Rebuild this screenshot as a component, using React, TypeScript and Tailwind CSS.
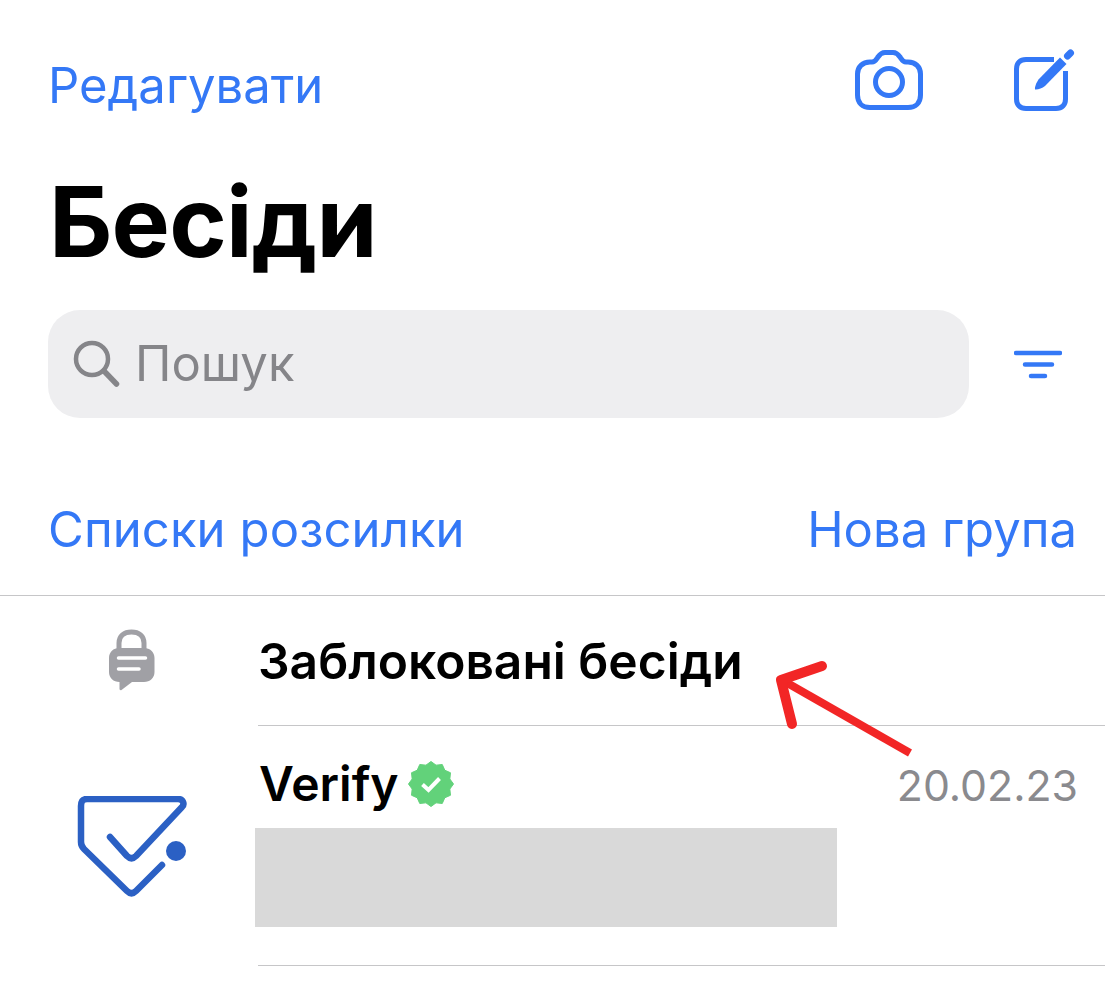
const badgePoints = Array.from({ length: 24 }, (_, i) => {
  const r = i % 2 === 0 ? 22.5 : 19.5;
  const a = (i / 24) * Math.PI * 2;
  return `${24 + r * Math.sin(a)},${24 - r * Math.cos(a)}`;
}).join(" ");

function CameraIcon() {
  return (
    <svg width="70" height="62" viewBox="0 0 70 62" fill="none" stroke="#3478f6" strokeWidth="5">
      <path d="M18 13C21 13 22 11 24 8C26 5 28 3.5 31 3.5H39C42 3.5 44 5 46 8C48 11 49 13 52 13H54C61.5 13 66.5 18 66.5 25V46C66.5 54 61.5 58.5 54 58.5H16C8.5 58.5 3.5 54 3.5 46V25C3.5 18 8.5 13 16 13Z" />
      <circle cx="35" cy="33" r="13.5" />
    </svg>
  );
}

function ComposeIcon() {
  return (
    <svg width="66" height="66" viewBox="0 0 66 66" fill="none" stroke="#3478f6">
      <path d="M42 13.5H14C8 13.5 4.5 17 4.5 23V53C4.5 59 8 62.5 14 62.5H44C50 62.5 53.5 59 53.5 53V25" strokeWidth="5" />
      <path d="M23 43.5C22.5 41 24.5 36.5 26.5 33.5L48 11.5L54.5 18L33 40C30 42.5 25.5 44 23 43.5Z" fill="#3478f6" stroke="none" />
      <path d="M55.5 10L58.5 7" strokeWidth="7" strokeLinecap="round" />
    </svg>
  );
}

function SearchIcon() {
  return (
    <svg width="50" height="50" viewBox="0 0 50 50" fill="none" stroke="#858589" strokeWidth="4.5" strokeLinecap="round">
      <circle cx="20" cy="20" r="16" />
      <path d="M32 32L44.5 45" strokeWidth="5.5" />
    </svg>
  );
}

function FilterIcon() {
  return (
    <svg width="48" height="30" viewBox="0 0 48 30" fill="none" stroke="#3478f6" strokeWidth="4.5" strokeLinecap="round">
      <path d="M2 4H46M11 15.5H38M17 27H31" />
    </svg>
  );
}

function LockChatIcon() {
  return (
    <svg width="46" height="62" viewBox="0 0 46 62">
      <path d="M10 21V14C10 7 15 3 22.5 3C30 3 35 7 35 14V21" fill="none" stroke="#a0a0a5" strokeWidth="5" />
      <path d="M10 19H35C41 19 45.5 23 45.5 29V43C45.5 49 41 53 35 53H23L12.5 61C11.5 61.5 10.5 61 10.5 60V53C4.5 53 0 49 0 43V29C0 23 4.5 19 10 19Z" fill="#a0a0a5" />
      <path d="M9.5 29H36.5M9.5 40H30" fill="none" stroke="#ffffff" strokeWidth="3.5" strokeLinecap="round" />
    </svg>
  );
}

function VerifyLogo() {
  return (
    <svg width="116" height="106" viewBox="0 0 116 106" fill="none" stroke="#2b60c4" strokeWidth="6.5" strokeLinecap="round" strokeLinejoin="round">
      <path d="M86 69L60 95C57 98 54 98 51 95L8 53C5.5 50.5 5 49 5 46V10C5 5 7 3 11 3H102C107 3 109 8 106 11L60 60C57 63 54 63 51 60L34 41" />
      <circle cx="100" cy="55" r="10" fill="#2b60c4" stroke="none" />
    </svg>
  );
}

function VerifiedBadge() {
  return (
    <svg width="48" height="48" viewBox="0 0 48 48">
      <polygon points={badgePoints} fill="#62d27a" stroke="#62d27a" strokeWidth="1" strokeLinejoin="round" />
      <path d="M15.5 24.5L21.5 30L32.5 18.5" fill="none" stroke="#ffffff" strokeWidth="4" />
    </svg>
  );
}

export default function App() {
  return (
    <div className="relative h-[993px] w-[1105px] overflow-hidden bg-white font-['Inter',sans-serif] text-black">
      <header className="flex h-[167px] items-start justify-between pl-[48px] pr-[27px]">
        <span className="mt-[56px] text-[49px] leading-[60px] text-[#3478f6]">Редагувати</span>
        <div className="mt-[46px] flex items-start gap-[88px]">
          <div className="mt-[3px]">
            <CameraIcon />
          </div>
          <ComposeIcon />
        </div>
      </header>

      <h1 className="pl-[49px] text-[98px] font-bold leading-[110px] tracking-[-0.8px]">Бесіди</h1>

      <div className="mt-[33px] flex items-center justify-between pl-[48px] pr-[43px]">
        <div className="flex h-[108px] w-[921px] items-center rounded-[32px] bg-[#eeeef0] pl-[24px]">
          <SearchIcon />
          <span className="ml-[13px] text-[49px] leading-[60px] text-[#858589]">Пошук</span>
        </div>
        <FilterIcon />
      </div>

      <div className="mt-[82px] flex h-[60px] items-center justify-between pl-[48px] pr-[28px] text-[49px] leading-[60px] text-[#3478f6]">
        <span className="tracking-[0.1px]">Списки розсилки</span>
        <span>Нова група</span>
      </div>

      <div className="mt-[35px] border-t border-[#c6c6c8]">
        <div className="flex h-[130px]">
          <div className="w-[258px] shrink-0 pl-[109px] pt-[33px]">
            <LockChatIcon />
          </div>
          <div className="flex flex-1 items-center border-b border-[#c6c6c8]">
            <span className="text-[49.7px] font-semibold leading-[60px]">Заблоковані бесіди</span>
          </div>
        </div>

        <div className="flex h-[240px]">
          <div className="w-[258px] shrink-0 pl-[76px] pt-[70px]">
            <VerifyLogo />
          </div>
          <div className="flex-1 border-b border-[#c6c6c8]">
            <div className="flex items-start justify-between pr-[27px]">
              <div className="ml-[1px] mt-[28px] flex items-center gap-[8px]">
                <span className="text-[48px] font-semibold leading-[60px]">Verify</span>
                <VerifiedBadge />
              </div>
              <span className="mt-[32px] text-[42.8px] leading-[56px] text-[#8a8a8e]">20.02.23</span>
            </div>
            <div className="ml-[-3px] mt-[14px] h-[99px] w-[582px] bg-[#d9d9d9]" />
          </div>
        </div>
      </div>

      <svg className="absolute left-[760px] top-[650px]" width="170" height="120" viewBox="0 0 170 120" fill="none" stroke="#f22626" strokeWidth="8">
        <path d="M150 103L22 30" />
        <path d="M62 16L21 30L32 74" strokeLinecap="round" strokeLinejoin="round" strokeWidth="10" />
      </svg>
    </div>
  );
}
